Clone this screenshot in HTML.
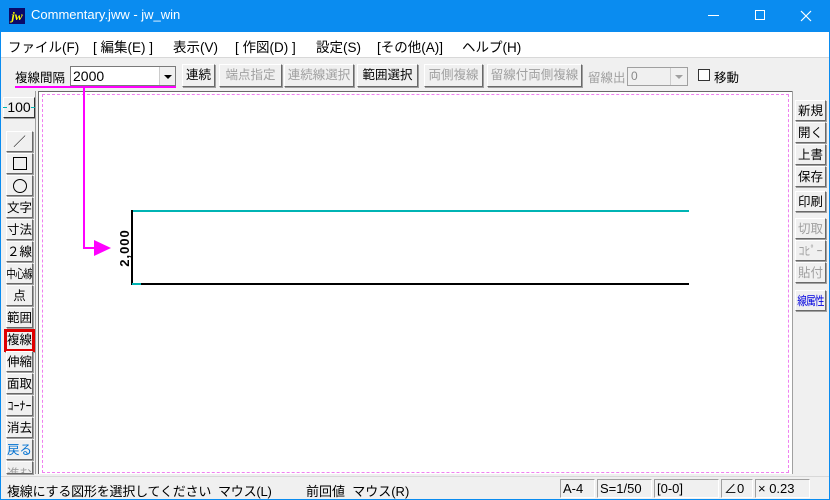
<!DOCTYPE html>
<html><head><meta charset="utf-8">
<style>
*{margin:0;padding:0;box-sizing:border-box}
body{width:830px;height:500px;overflow:hidden;background:#f0f0f0;font-family:"Liberation Sans","Noto Sans CJK JP",sans-serif;position:relative;font-size:13px;color:#000}
.a{position:absolute}
#title{left:0;top:0;width:830px;height:32px;background:#0a8cf0;color:#fff}
#menu{left:1px;top:32px;width:828px;height:25px;background:#fff;font-size:13.5px}
#menu span{position:absolute;top:4px;white-space:pre}
.btn{position:absolute;background:#f0f0f0;border:1px solid;border-color:#fff #696969 #696969 #fff;box-shadow:1px 1px 0 #a0a0a0;text-align:center;font-size:12.5px;line-height:20px;white-space:nowrap;overflow:hidden}
.dis{color:#a0a0a0}
.lb{left:6px;width:27px;height:21px}
.rb{left:795px;width:31px;height:21px}
.sm{display:inline-block;transform:scaleX(0.8);font-size:12px;letter-spacing:-1px}
</style></head><body>
<div class="a" style="left:0;top:0;width:1px;height:500px;background:#0a8cf0"></div>
<div class="a" style="left:829px;top:0;width:1px;height:500px;background:#0a8cf0"></div>
<div class="a" style="left:0;top:499px;width:830px;height:1px;background:#0a8cf0"></div>
<div id="title" class="a">
 <div class="a" style="left:9px;top:8px;width:16px;height:16px;background:#0a0a6a;color:#ff0;font:bold italic 12px 'Liberation Serif',serif;line-height:16px;text-align:center">jw</div>
 <div class="a" style="left:31px;top:7px;font-size:13px">Commentary.jww - jw_win</div>
 <div class="a" style="left:708px;top:15px;width:11px;height:1px;background:#fff"></div>
 <div class="a" style="left:755px;top:10px;width:10px;height:10px;border:1px solid #fff"></div>
 <svg class="a" style="left:800px;top:10px" width="12" height="12"><path d="M1 1L11 11M11 1L1 11" stroke="#fff" stroke-width="1.2"/></svg>
</div>
<div id="menu" class="a">
<span style="left:7px">ファイル(F)</span>
<span style="left:92px">[ 編集(E) ]</span>
<span style="left:172px">表示(V)</span>
<span style="left:234px">[ 作図(D) ]</span>
<span style="left:315px">設定(S)</span>
<span style="left:376px">[その他(A)]</span>
<span style="left:461px">ヘルプ(H)</span>
</div>
<div class="a" style="left:1px;top:57px;width:828px;height:1px;background:#d8d8d8"></div>
<div class="a" style="left:15px;top:67px;font-size:12.5px">複線間隔</div>
<div class="a" style="left:70px;top:66px;width:106px;height:20px;background:#fff;border:1px solid #7a7a7a;font-size:14px;line-height:18px;padding-left:2px">2000</div>
<div class="a" style="left:159px;top:67px;width:16px;height:18px;background:#f0f0f0;border-left:1px solid #ccc"><svg width="16" height="18"><path d="M4 8h8l-4 4z" fill="#000"/></svg></div>
<div class="btn" style="left:182px;top:64px;width:33px;height:23px;line-height:21px">連続</div>
<div class="btn dis" style="left:219px;top:64px;width:63px;height:23px;line-height:21px">端点指定</div>
<div class="btn dis" style="left:284px;top:64px;width:70px;height:23px;line-height:21px">連続線選択</div>
<div class="btn" style="left:357px;top:64px;width:61px;height:23px;line-height:21px">範囲選択</div>
<div class="btn dis" style="left:424px;top:64px;width:59px;height:23px;line-height:21px">両側複線</div>
<div class="btn dis" style="left:487px;top:64px;width:95px;height:23px;line-height:21px">留線付両側複線</div>
<div class="a dis" style="left:588px;top:67px;font-size:12.5px">留線出</div>
<div class="a" style="left:627px;top:67px;width:61px;height:19px;border:1px solid #a0a0a0;background:#f0f0f0;font-size:12px;color:#888;padding-left:3px;line-height:17px">0</div>
<div class="a" style="left:670px;top:68px;width:16px;height:17px;border-left:1px solid #ccc"><svg width="16" height="17"><path d="M4 7h8l-4 4z" fill="#a0a0a0"/></svg></div>
<div class="a" style="left:698px;top:69px;width:12px;height:12px;background:#fff;border:1px solid #333"></div>
<div class="a" style="left:714px;top:67px;font-size:12.5px">移動</div>
<div class="a" style="left:38px;top:91px;width:755px;height:383px;background:#fff;border-left:1px solid #696969;border-top:1px solid #696969"></div>
<div class="a" style="left:42px;top:94px;width:747px;height:379px;border:1px dashed #f080f0"></div>
<div class="a" style="left:35px;top:91px;width:1px;height:383px;background:#a0a0a0"></div>
<div class="a" style="left:792px;top:91px;width:1px;height:383px;background:#a0a0a0"></div>
<svg class="a" style="left:0;top:0" width="830" height="500">
 <line x1="132" y1="211" x2="689" y2="211" stroke="#00b4b4" stroke-width="2"/>
 <line x1="131" y1="284" x2="689" y2="284" stroke="#000" stroke-width="2"/>
 <line x1="132" y1="210" x2="132" y2="285" stroke="#000" stroke-width="2"/>
 <line x1="132" y1="284" x2="141" y2="284" stroke="#00b4b4" stroke-width="2"/>
 <text x="0" y="0" transform="translate(129,248) rotate(-90)" text-anchor="middle" font-family="Liberation Sans" font-weight="bold" font-size="13" letter-spacing="1">2,000</text>
 <line x1="15" y1="87" x2="176" y2="87" stroke="#f0f" stroke-width="2"/>
 <polyline points="84,88 84,248 96,248" fill="none" stroke="#f0f" stroke-width="2"/>
 <path d="M94 240L111 248L94 256Z" fill="#f0f"/>
</svg>
<div class="btn" style="left:3px;top:97px;width:32px;height:21px;font-size:14px;line-height:19px;border-color:#fff #333 #333 #fff">100</div>
<div class="a" style="left:3px;top:107px;width:4px;height:1px;background:#00b4b4"></div>
<div class="a" style="left:31px;top:107px;width:4px;height:1px;background:#00b4b4"></div>
<div class="btn lb" style="top:131px">／</div>
<div class="btn lb" style="top:153px"><div style="width:14px;height:13px;border:1px solid #000;margin:3px auto"></div></div>
<div class="btn lb" style="top:175px"><div style="width:14px;height:14px;border:1px solid #000;border-radius:50%;margin:3px auto"></div></div>
<div class="btn lb" style="top:197px">文字</div>
<div class="btn lb" style="top:219px">寸法</div>
<div class="btn lb" style="top:241px">２線</div>
<div class="btn lb" style="top:263px"><span class="sm" style="margin-left:-6px;margin-right:-6px">中心線</span></div>
<div class="btn lb" style="top:285px">点</div>
<div class="btn lb" style="top:307px">範囲</div>
<div class="btn lb" style="top:329px;border:3px solid #e00000;line-height:16px;left:4px;width:31px;height:23px">複線</div>
<div class="btn lb" style="top:351px">伸縮</div>
<div class="btn lb" style="top:373px">面取</div>
<div class="btn lb" style="top:395px;font-size:12px">ｺｰﾅｰ</div>
<div class="btn lb" style="top:417px">消去</div>
<div class="btn lb" style="top:439px;color:#0070d0">戻る</div>
<div class="btn lb dis" style="top:461px;height:13px;line-height:24px">進む</div>
<div class="btn rb" style="top:100px">新規</div>
<div class="btn rb" style="top:122px">開く</div>
<div class="btn rb" style="top:144px">上書</div>
<div class="btn rb" style="top:166px">保存</div>
<div class="btn rb" style="top:191px">印刷</div>
<div class="btn rb dis" style="top:218px">切取</div>
<div class="btn rb dis" style="top:240px;font-size:12px">ｺﾋﾟｰ</div>
<div class="btn rb dis" style="top:262px">貼付</div>
<div class="btn rb" style="top:290px;color:#0000e0"><span class="sm" style="margin-left:-6px;margin-right:-6px">線属性</span></div>
<div class="a" style="left:1px;top:476px;width:828px;height:1px;background:#d8d8d8"></div>
<div class="a" style="left:7px;top:481px;font-size:13px;white-space:pre;letter-spacing:-0.2px">複線にする図形を選択してください  マウス(L)</div>
<div class="a" style="left:306px;top:481px;font-size:13px;white-space:pre">前回値  マウス(R)</div>
<div class="a" style="left:560px;top:479px;width:35px;height:19px;border:1px solid;border-color:#a0a0a0 #fff #fff #a0a0a0;padding-left:2px;line-height:17px">A-4</div>
<div class="a" style="left:597px;top:479px;width:55px;height:19px;border:1px solid;border-color:#a0a0a0 #fff #fff #a0a0a0;padding-left:2px;line-height:17px">S=1/50</div>
<div class="a" style="left:654px;top:479px;width:65px;height:19px;border:1px solid;border-color:#a0a0a0 #fff #fff #a0a0a0;padding-left:2px;line-height:17px">[0-0]</div>
<div class="a" style="left:721px;top:479px;width:32px;height:19px;border:1px solid;border-color:#a0a0a0 #fff #fff #a0a0a0;padding-left:2px;line-height:17px">∠0</div>
<div class="a" style="left:755px;top:479px;width:55px;height:19px;border:1px solid;border-color:#a0a0a0 #fff #fff #a0a0a0;padding-left:2px;line-height:17px">× 0.23</div>
</body></html>
